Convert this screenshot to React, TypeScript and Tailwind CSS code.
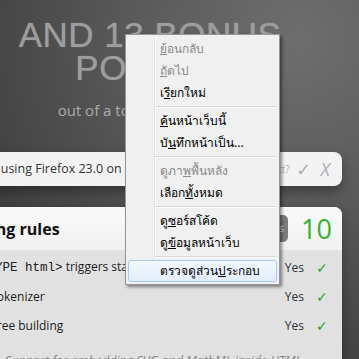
import React from "react";

type MenuEntry =
  | { sep: true }
  | { sep?: false; pre: string; key: string; post: string; disabled?: boolean; active?: boolean };

const menu: MenuEntry[] = [
  { pre: "", key: "ย้", post: "อนกลับ", disabled: true },
  { pre: "", key: "ถั", post: "ดไป", disabled: true },
  { pre: "เ", key: "รี", post: "ยกใหม่" },
  { sep: true },
  { pre: "", key: "ค้", post: "นหน้าเว็บนี้" },
  { pre: "บั", key: "น", post: "ทึกหน้าเป็น..." },
  { sep: true },
  { pre: "ดูภา", key: "พ", post: "พื้นหลัง", disabled: true },
  { pre: "เลือก", key: "ทั้", post: "งหมด" },
  { sep: true },
  { pre: "ดู", key: "ซ", post: "อร์สโค้ด" },
  { pre: "ดู", key: "ข้", post: "อมูลหน้าเว็บ" },
  { sep: true },
  { pre: "ตรวจดูส่วน", key: "ป", post: "ระกอบ", active: true },
];

const rows = [
  { mono: "<!DOCTYPE html>", text: " triggers standards mode" },
  { mono: "", text: "HTML5 tokenizer" },
  { mono: "", text: "HTML5 tree building" },
];

function ContextMenu() {
  return (
    <div className="absolute left-[125px] top-[34px] w-[155px] border border-[#979797] bg-[linear-gradient(90deg,#f0f0f0_28px,#e2e3e3_28px,#e2e3e3_29px,#ffffff_29px,#ffffff_30px,#f0f0f0_30px)] pt-[3px] pb-[2px] shadow-[2px_2px_3px_rgba(0,0,0,0.45)] font-['Noto_Sans','DejaVu_Sans',sans-serif] text-[12px]">
      {menu.map((m, i) =>
        m.sep ? (
          <div key={i} className="flex h-[6px] items-center ml-[29px] mr-[2px]">
            <div className="h-[2px] w-full border-t border-t-[#d7d7d7] border-b border-b-white" />
          </div>
        ) : m.active ? (
          <div
            key={i}
            className="mx-[2px] flex h-[22px] items-center rounded-[3px] border border-[#a9c9ef] bg-[linear-gradient(180deg,#f3f8fe,#e3edfa)] pl-[31px] text-black"
          >
            {m.pre}
            <u>{m.key}</u>
            {m.post}
          </div>
        ) : (
          <div
            key={i}
            className={`mx-[2px] flex h-[22px] items-center pl-[32px] ${m.disabled ? "text-[#8a8a8a]" : "text-black"}`}
          >
            {m.pre}
            <u>{m.key}</u>
            {m.post}
          </div>
        )
      )}
    </div>
  );
}

export default function App() {
  return (
    <div className="relative h-[359px] w-[359px] overflow-hidden bg-[radial-gradient(circle_at_300px_40px,#6e6e6e_0px,#5c5c5c_150px,#484848_290px,#353535_420px)] font-['Open_Sans',sans-serif]">
      {/* hero */}
      <div className="w-[300px] pt-[18px] text-center">
        <div className="font-['Liberation_Sans',sans-serif] text-[35px] leading-[33px] tracking-[0.5px] text-[#9d9d9d] [text-shadow:0_0_1px_rgba(255,255,255,0.35)]">
          <div>AND 13 BONUS</div>
          <div className="pr-[16px]">POINTS</div>
        </div>
        <p className="mt-[16px] text-[15px] leading-[20px] text-[#ababab]">out of a total of 555 points</p>
      </div>

      {/* browser detection bar */}
      <div className="ml-[-70px] mr-[17px] mt-[32px] flex h-[34px] items-center justify-between rounded-lg bg-[#f3f3f3] pl-[23px] pr-[12px] shadow-[0_6px_12px_rgba(0,0,0,0.35)]">
        <span className="whitespace-nowrap text-[12.5px] text-[#333]">You are using Firefox 23.0 on Windows 7</span>
        <div className="flex items-center">
          <span className="text-[10px] text-[#b0b0b0]">Correct?</span>
          <span className="ml-[6px] text-[18px] leading-none text-[#a9b0bb]">✓</span>
          <span className="ml-[10px] text-[18px] italic leading-none text-[#a9b0bb]">X</span>
        </div>
      </div>

      {/* section panel */}
      <div className="ml-[-70px] mr-[17px] mt-[21px] overflow-hidden rounded-t-lg bg-[#e1e1e1] shadow-[0_4px_12px_rgba(0,0,0,0.35)]">
        <div className="flex h-[43px] items-center bg-[linear-gradient(180deg,#fafafa,#f1f1f1)] pl-[26px] pr-[10px]">
          <h2 className="flex-1 text-[16px] font-bold text-[#111]">Parsing rules</h2>
          <span className="flex h-[27px] items-center rounded-[5px] bg-[#7b7b7b] px-[4px] text-[11px] text-[#cfcfcf]">bonus</span>
          <span className="ml-[13px] text-[27px] leading-none text-[#33b233]">10</span>
        </div>
        <div className="pt-[3px]">
          {rows.map((r) => (
            <div key={r.text} className="flex h-[29px] items-center pl-[20px] pr-[14px] text-[12px] text-[#222]">
              <div className="flex-1 whitespace-nowrap">
                {r.mono && <span className="font-['Liberation_Mono',monospace] text-[12.5px]">{r.mono}</span>}
                {r.text}
              </div>
              <span className="text-[#333]">Yes</span>
              <span className="ml-[12px] text-[14px] text-[#2ba02b]">✓</span>
            </div>
          ))}
          <p className="mt-[12px] whitespace-nowrap pl-[75px] text-[12.5px] italic text-[#858585]">
            Support for embedding SVG and MathML inside HTML
          </p>
          <div className="h-[20px]" />
        </div>
      </div>

      <ContextMenu />
    </div>
  );
}
